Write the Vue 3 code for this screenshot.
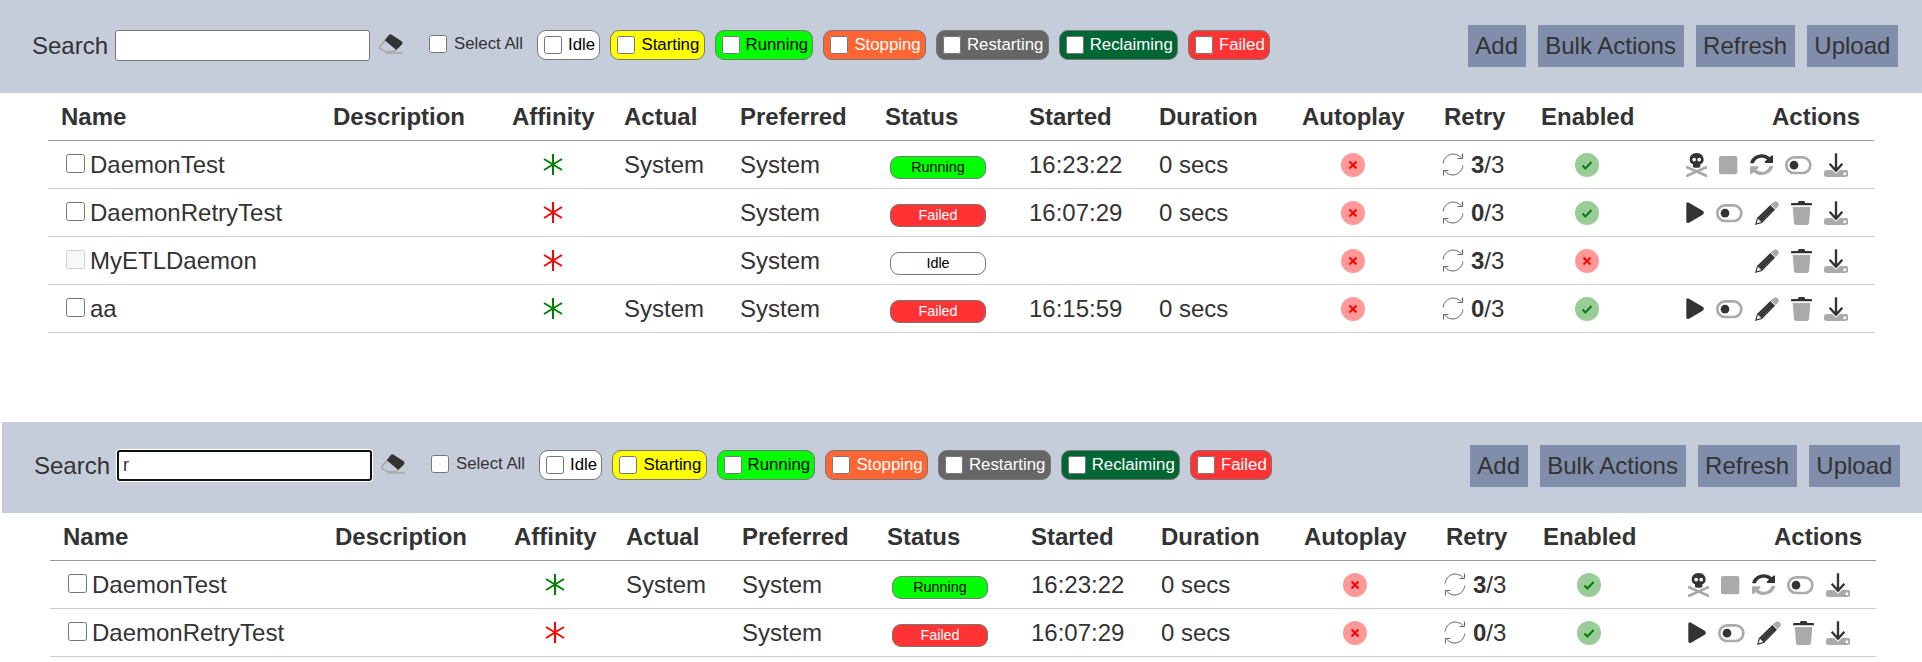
<script setup>
const SYNC_TOP = 'M370.72 133.28C339.458 104.008 298.888 87.962 255.848 88c-77.458.068-144.328 53.178-162.791 126.85-1.344 5.363-6.122 9.15-11.651 9.15H24.103c-7.498 0-13.194-6.807-11.807-14.176C33.933 94.924 134.813 8 256 8c66.448 0 126.791 26.136 171.315 68.685L463.03 40.97C478.149 25.851 504 36.559 504 57.941V192c0 13.255-10.745 24-24 24H345.941c-21.382 0-32.09-25.851-16.971-40.971l41.75-41.749z'
const SYNC_BOTTOM = 'M32 296h134.059c21.382 0 32.09 25.851 16.971 40.971l-41.75 41.75c31.262 29.273 71.835 45.319 114.876 45.28 77.418-.07 144.315-53.144 162.787-126.849 1.344-5.363 6.122-9.15 11.651-9.15h57.304c7.498 0 13.194 6.807 11.807 14.176C478.067 417.076 377.187 504 256 504c-66.448 0-126.791-26.136-171.315-68.685L48.97 471.03C33.851 486.149 8 475.441 8 454.059V320c0-13.255 10.745-24 24-24z'
const DARK = '#333'
const GRAY = '#aaa'

const ICONS = {
  skull: { w: 64, parts: [
    { d: 'M3 43 L61 68 M61 43 L3 68', fill: 'none', stroke: GRAY, 'stroke-width': 8, 'stroke-linecap': 'round' },
    { d: 'M32 0C46 0 53 9 53 20C53 28 48 32 43 34V42C43 45 21 45 21 42V34C16 32 11 28 11 20C11 9 18 0 32 0Z', fill: DARK },
    { d: 'M19 20a5.500 5.500 0 1 0 11 0a5.500 5.500 0 1 0 -11 0ZM34 20a5.500 5.500 0 1 0 11 0a5.500 5.500 0 1 0 -11 0Z', fill: '#fff' }
  ] },
  stop: { w: 55, parts: [
    { d: 'M6 9H49Q55 9 55 15V58Q55 64 49 64H6Q0 64 0 58V15Q0 9 6 9Z', fill: GRAY }
  ] },
  refresh: { w: 70, parts: [
    { d: SYNC_TOP, fill: DARK, transform: 'translate(-1.100 3) scale(.141 .125)' },
    { d: SYNC_BOTTOM, fill: GRAY, transform: 'translate(-1.100 3) scale(.141 .125)' }
  ] },
  toggle: { w: 80, parts: [
    { d: 'M27.500 13H52.500A23.500 23.500 0 0 1 52.500 60H27.500A23.500 23.500 0 0 1 27.500 13Z', fill: '#fff', stroke: GRAY, 'stroke-width': 8 },
    { d: 'M14 36.500a13 13 0 1 0 26 0a13 13 0 1 0 -26 0Z', fill: DARK }
  ] },
  download: { w: 73, parts: [
    { d: 'M8 51H24L36 62L48 51H65Q73 51 73 59V64Q73 72 65 72H8Q0 72 0 64V59Q0 51 8 51Z', fill: GRAY },
    { d: 'M58 62a4.500 4.500 0 1 0 9 0a4.500 4.500 0 1 0 -9 0Z', fill: '#fff' },
    { d: 'M36 1V52M17 32L36 53L55 32', fill: 'none', stroke: DARK, 'stroke-width': 7 }
  ] },
  play: { w: 54, parts: [
    { d: 'M1 10Q1 1 9 5L50 29Q57 35 50 41L9 65Q1 69 1 60Z', fill: DARK }
  ] },
  pencil: { w: 72, parts: [
    { d: 'M47 10L58 2Q62 -1 66 2L70 7Q73 11 70 15L62 25Z', fill: GRAY },
    { d: 'M46 12L60 26L21 66L0 72L6 51Z', fill: DARK },
    { d: 'M13 54L44 23M21 60L50 30', fill: 'none', stroke: '#666', 'stroke-width': 2 },
    { d: 'M9 53L19 63L5 67Z', fill: '#fff' }
  ] },
  trash: { w: 63, parts: [
    { d: 'M20 6Q21 0 26 0H37Q42 0 43 6H60Q63 6 63 9V13H0V9Q0 6 3 6Z', fill: DARK },
    { d: 'M5 18H58L54 66Q53 72 48 72H15Q10 72 9 66Z', fill: GRAY }
  ] }
}

const FILTERS = [
  { label: 'Idle', cls: 'idle' },
  { label: 'Starting', cls: 'starting' },
  { label: 'Running', cls: 'running' },
  { label: 'Stopping', cls: 'stopping' },
  { label: 'Restarting', cls: 'restarting' },
  { label: 'Reclaiming', cls: 'reclaiming' },
  { label: 'Failed', cls: 'failed' }
]

const BUTTONS = ['Add', 'Bulk Actions', 'Refresh', 'Upload']

const COLUMNS = [
  { label: 'Name', cls: 'c-name' },
  { label: 'Description', cls: 'c-desc' },
  { label: 'Affinity', cls: 'c-aff' },
  { label: 'Actual', cls: 'c-actual' },
  { label: 'Preferred', cls: 'c-pref' },
  { label: 'Status', cls: 'c-status' },
  { label: 'Started', cls: 'c-started' },
  { label: 'Duration', cls: 'c-dur' },
  { label: 'Autoplay', cls: 'c-auto' },
  { label: 'Retry', cls: 'c-retry' },
  { label: 'Enabled', cls: 'c-en' },
  { label: 'Actions', cls: 'c-act' }
]

const RUN_ACTIONS = ['skull', 'stop', 'refresh', 'toggle', 'download']
const IDLE_ACTIONS = ['play', 'toggle', 'pencil', 'trash', 'download']

const ROWS = [
  { name: 'DaemonTest', ok: true, actual: 'System', status: 'Running', st: 'running', started: '16:23:22', dur: '0 secs', tries: 3, enabled: true, actions: RUN_ACTIONS },
  { name: 'DaemonRetryTest', ok: false, actual: '', status: 'Failed', st: 'failed', started: '16:07:29', dur: '0 secs', tries: 0, enabled: true, actions: IDLE_ACTIONS },
  { name: 'MyETLDaemon', ok: false, actual: '', status: 'Idle', st: 'idle', started: '', dur: '', tries: 3, enabled: false, disabled: true, actions: ['pencil', 'trash', 'download'] },
  { name: 'aa', ok: true, actual: 'System', status: 'Failed', st: 'failed', started: '16:15:59', dur: '0 secs', tries: 0, enabled: true, actions: IDLE_ACTIONS }
]

const SECTIONS = [
  { id: 'a', query: '', focused: false, rows: ROWS },
  { id: 'b', query: 'r', focused: true, rows: ROWS.slice(0, 2) }
]
</script>

<template>
  <div class="page">
    <section v-for="s in SECTIONS" :key="s.id" class="section" :class="{ second: s.focused }">
      <div class="bar">
        <label class="search-label">Search</label>
        <input class="search" :class="{ focused: s.focused }" type="text" :value="s.query" />
        <svg class="eraser" width="24" height="20" viewBox="0 0 72 60">
          <path d="M18 20L3 37Q0 41 4 44L19 53H40L52 48" fill="none" stroke="#aaa" stroke-width="5" />
          <path d="M20 57H72" fill="none" stroke="#aaa" stroke-width="5" />
          <path d="M29 4Q33 -1 38 2L68 22Q73 27 68 32L52 48L17 19Z" fill="#333" />
        </svg>
        <label class="select-all"><input type="checkbox" />Select All</label>
        <div class="chips">
          <label v-for="f in FILTERS" :key="f.label" class="chip" :class="f.cls">
            <input type="checkbox" />{{ f.label }}
          </label>
        </div>
        <div class="buttons">
          <button v-for="b in BUTTONS" :key="b" class="btn" type="button">{{ b }}</button>
        </div>
      </div>
      <table class="grid">
        <thead>
          <tr>
            <th v-for="c in COLUMNS" :key="c.label" :class="c.cls">{{ c.label }}</th>
          </tr>
        </thead>
        <tbody>
          <tr v-for="r in s.rows" :key="r.name">
            <td class="c-name">
              <div class="name-cell">
                <input type="checkbox" :disabled="r.disabled" />
                <span>{{ r.name }}</span>
              </div>
            </td>
            <td class="c-desc"></td>
            <td class="c-aff center">
              <svg class="star" width="20" height="21" viewBox="0 0 20 21" :stroke="r.ok ? '#008000' : '#ff0000'">
                <path d="M10 0V21M1 5L19 16M19 5L1 16" fill="none" stroke-width="2" />
              </svg>
            </td>
            <td class="c-actual">{{ r.actual }}</td>
            <td class="c-pref">System</td>
            <td class="c-status"><span class="pill" :class="r.st">{{ r.status }}</span></td>
            <td class="c-started">{{ r.started }}</td>
            <td class="c-dur">{{ r.dur }}</td>
            <td class="c-auto center">
              <svg class="dot" width="24" height="24" viewBox="0 0 24 24">
                <circle cx="12" cy="12" r="12" fill="#ff9999" />
                <path d="M8.500 8.500L15.500 15.500M15.500 8.500L8.500 15.500" stroke="#ff0000" stroke-width="2" fill="none" />
              </svg>
            </td>
            <td class="c-retry">
              <div class="retry-cell">
                <svg width="22" height="23" viewBox="0 0 22 23" fill="none" stroke="#666" stroke-width="1">
                  <path d="M1 10.500C2 5 6 1 11 1C14.500 1 17 2.500 19.500 5" />
                  <path d="M20.500 .5V5.500H15.500" />
                  <path d="M21 12.500C20 18 16 22 11 22C7.500 22 5 20.500 2.500 18" />
                  <path d="M1.500 22.500V17.500H6.500" />
                </svg>
                <span><b>{{ r.tries }}</b>/3</span>
              </div>
            </td>
            <td class="c-en center">
              <svg class="dot" width="24" height="24" viewBox="0 0 24 24">
                <template v-if="r.enabled">
                  <circle cx="12" cy="12" r="12" fill="#99cc99" />
                  <path d="M7.500 12.500L10.500 15.500L16.500 9" stroke="#008000" stroke-width="2" fill="none" />
                </template>
                <template v-else>
                  <circle cx="12" cy="12" r="12" fill="#ff9999" />
                  <path d="M8.500 8.500L15.500 15.500M15.500 8.500L8.500 15.500" stroke="#ff0000" stroke-width="2" fill="none" />
                </template>
              </svg>
            </td>
            <td class="c-act">
              <div class="actions">
                <svg
                  v-for="a in r.actions"
                  :key="a"
                  :width="ICONS[a].w / 3"
                  height="24"
                  :viewBox="`0 0 ${ICONS[a].w} 72`"
                >
                  <path v-for="(p, i) in ICONS[a].parts" :key="i" v-bind="p" />
                </svg>
              </div>
            </td>
          </tr>
        </tbody>
      </table>
    </section>
  </div>
</template>

<style scoped>
.page {
  width: 100%;
  height: 662px;
  overflow: hidden;
  color: #333;
  font-family: "Liberation Sans", Arial, sans-serif;
  font-size: 24px;
}
.section {
  margin-bottom: 89px;
}
.section.second {
  margin-left: 2px;
  margin-bottom: 0;
}
.bar {
  display: flex;
  align-items: center;
  box-sizing: border-box;
  height: 93px;
  padding: 25px 24px 26px 32px;
  background: #c5cddb;
}
.second .bar {
  height: 91px;
  padding-top: 23px;
  padding-right: 22px;
}
.search-label {
  margin-bottom: 1px;
}
.search {
  box-sizing: border-box;
  width: 255px;
  height: 31px;
  margin: 0 0 1px 7px;
  padding: 1px 4px;
  border: 1px solid #767676;
  border-radius: 3px;
  background: #fff;
  color: #333;
  font-family: inherit;
  font-size: 18px;
  outline: none;
}
.search.focused {
  border: 2px solid #101010;
  box-shadow: 0 0 0 1px #fff;
}
.eraser {
  margin: 0 0 4px 9px;
}
.select-all {
  display: flex;
  align-items: center;
  gap: 7px;
  margin: 0 0 4px 26px;
  font-size: 16.8px;
}
input[type="checkbox"] {
  width: 18px;
  height: 18px;
  margin: 0;
  flex: none;
}
.chips {
  display: flex;
  gap: 10px;
  margin: 0 0 3px 14px;
}
.chip {
  display: flex;
  align-items: center;
  gap: 6px;
  box-sizing: border-box;
  height: 30px;
  padding: 0 4.300px 0 6px;
  border: 1px solid #777;
  border-radius: 9px;
  font-size: 16.8px;
  color: #000;
}
.chip.idle { background: #fff; }
.chip.starting { background: #ffff00; }
.chip.running { background: #00ff00; }
.chip.stopping { background: #ff6633; color: #fff; }
.chip.restarting { background: #666666; color: #fff; }
.chip.reclaiming { background: #006633; color: #fff; }
.chip.failed { background: #ff3333; color: #fff; }
.buttons {
  display: flex;
  gap: 12px;
  margin-left: auto;
}
.btn {
  height: 42px;
  padding: 0 7.600px;
  border: none;
  background: #808eab;
  color: #333;
  font-family: inherit;
  font-size: 24px;
}
.grid {
  width: 1826px;
  margin-left: 48px;
  table-layout: fixed;
  border-collapse: separate;
  border-spacing: 0;
}
th {
  height: 48px;
  padding: 0 0 0 13px;
  border-bottom: 1px solid #999;
  box-sizing: border-box;
  font-weight: 700;
  text-align: left;
}
td {
  height: 48px;
  padding: 0 0 0 13px;
  border-bottom: 1px solid #ccc;
  box-sizing: border-box;
  vertical-align: middle;
}
.c-name { width: 272px; }
.c-desc { width: 179px; }
.c-aff { width: 112px; padding-right: 17px; }
.c-actual { width: 116px; }
.c-pref { width: 145px; }
.c-status { width: 144px; }
.c-started { width: 130px; }
.c-dur { width: 143px; }
.c-auto { width: 142px; padding-right: 27px; }
.c-retry { width: 97px; }
.c-en { width: 119px; padding-right: 14px; }
.c-act { width: 227px; padding-right: 14px; }
th.c-act { text-align: right; }
.center {
  text-align: center;
  line-height: 0;
}
.star, .dot {
  display: inline-block;
  vertical-align: middle;
}
.name-cell {
  display: flex;
  align-items: center;
  gap: 5px;
  margin-left: 5px;
}
.name-cell input {
  width: 19px;
  height: 19px;
  margin-top: -2px;
}
.pill {
  display: block;
  box-sizing: border-box;
  width: 96px;
  height: 23px;
  margin: 6px 0 0 5px;
  border: 1px solid #777;
  border-radius: 9px;
  font-size: 14.400px;
  line-height: 21px;
  text-align: center;
  color: #000;
}
.pill.running { background: #00ff00; }
.pill.failed { background: #ff3333; color: #fff; }
.pill.idle { background: #fff; }
.retry-cell {
  display: flex;
  align-items: center;
  gap: 7px;
  margin-left: -2px;
}
.actions {
  display: flex;
  justify-content: flex-end;
  gap: 12px;
  padding-right: 12px;
}
</style>

<style>
html, body {
  margin: 0;
  background: #fff;
  overflow: hidden;
}
</style>
